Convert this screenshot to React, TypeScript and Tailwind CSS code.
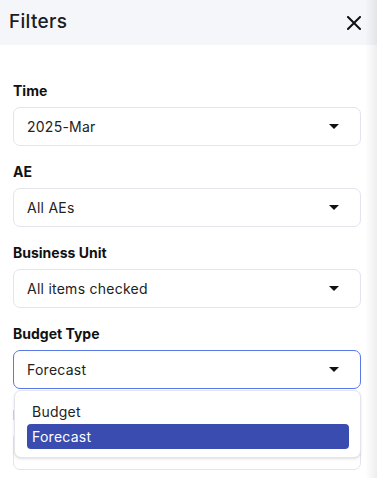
import React from "react";

const fields = [
  { label: "Time", value: "2025-Mar" },
  { label: "AE", value: "All AEs" },
  { label: "Business Unit", value: "All items checked" },
];

function Caret() {
  return (
    <svg width="10" height="5" viewBox="0 0 10 5" className="shrink-0">
      <path d="M0 0h10L5 5z" fill="#111" />
    </svg>
  );
}

function Box({ value, active }: { value: string; active?: boolean }) {
  return (
    <div
      className={`h-[39px] rounded-[7px] border bg-white flex items-center justify-between pl-[13px] pr-[21px] text-[14px] tracking-[0.25px] text-[#222] ${
        active ? "border-[#5a78e6]" : "border-[#e3e4ee]"
      }`}
    >
      <span>{value}</span>
      <Caret />
    </div>
  );
}

function Field({
  label,
  value,
  active,
}: {
  label: string;
  value: string;
  active?: boolean;
}) {
  return (
    <div className="flex flex-col gap-[6px]">
      <div className="text-[14px] leading-[20px] font-bold text-[#111]">
        {label}
      </div>
      <Box value={value} active={active} />
    </div>
  );
}

export default function App() {
  return (
    <div
      className="relative w-[377px] h-[478px] overflow-hidden bg-white"
      style={{ fontFamily: "Inter, 'Noto Sans', sans-serif" }}
    >
      <div className="h-[45px] bg-[#f4f6fa] flex items-center justify-between pl-[9px] pr-[16px]">
        <h1 className="text-[19px] font-medium text-[#1b1d22] tracking-[0.3px]">
          Filters
        </h1>
        <svg width="14" height="14" viewBox="0 0 14 14">
          <path
            d="M1 1l12 12M13 1L1 13"
            stroke="#111"
            strokeWidth="2"
            strokeLinecap="square"
          />
        </svg>
      </div>

      <div className="pt-[36px] pl-[13px] pr-[16px] flex flex-col gap-[16px]">
        {fields.map((f) => (
          <Field key={f.label} label={f.label} value={f.value} />
        ))}
        <div className="relative">
          <Field label="Budget Type" value="Forecast" active />
          <div className="absolute left-[1px] right-0 top-[66px] z-10 rounded-[7px] border border-[#e3e4ee] bg-white shadow-sm pl-[12px] pr-[11px] py-[8px] text-[14px] tracking-[0.25px]">
            <div className="h-[25px] flex items-center pl-[5px] text-[#222]">
              Budget
            </div>
            <div className="h-[25px] flex items-center pl-[5px] rounded-[4px] bg-[#3a4cb0] text-white">
              Forecast
            </div>
          </div>
        </div>
        <div className="flex flex-col gap-[6px]">
          <div className="h-[20px] flex items-center">
            <div className="w-[2px] h-[10px] bg-[#d4d4d8]" />
          </div>
          <Box value="" />
        </div>
      </div>

      <div className="absolute top-0 right-0 h-full w-[12px] bg-gradient-to-r from-black/0 to-black/[0.07]" />
    </div>
  );
}
